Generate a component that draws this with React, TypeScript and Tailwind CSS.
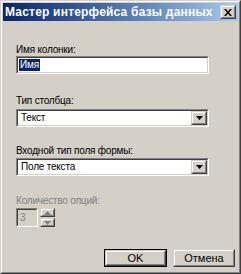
const font = { fontFamily: '"Liberation Sans", Arial, sans-serif' };

function Sunken({ children, className = "" }: { children?: React.ReactNode; className?: string }) {
  return (
    <div className={"border border-t-[#808080] border-l-[#808080] border-r-white border-b-white " + className}>
      <div className="h-full border border-t-[#404040] border-l-[#404040] border-r-[#D4D0C8] border-b-[#D4D0C8]">
        {children}
      </div>
    </div>
  );
}

function Raised({ children, className = "" }: { children?: React.ReactNode; className?: string }) {
  return (
    <div className={"border border-t-[#D4D0C8] border-l-[#D4D0C8] border-r-[#404040] border-b-[#404040] " + className}>
      <div className="h-full flex items-center justify-center border border-t-white border-l-white border-r-[#808080] border-b-[#808080] bg-[#D4D0C8]">
        {children}
      </div>
    </div>
  );
}

function Arrow({ up = false, color = "#000" }: { up?: boolean; color?: string }) {
  return (
    <svg width="7" height="4" viewBox="0 0 7 4">
      <path d={up ? "M3.5 0L7 4H0Z" : "M0 0H7L3.5 4Z"} fill={color} />
    </svg>
  );
}

function Combo({ value }: { value: string }) {
  return (
    <Sunken className="w-[193px] h-[18px]">
      <div className="flex h-full bg-white">
        <div className="flex-1 flex items-center pl-[3px] leading-none text-black">{value}</div>
        <Raised className="w-[16px] h-full">
          <Arrow />
        </Raised>
      </div>
    </Sunken>
  );
}

export default function App() {
  return (
    <div className="w-[241px] h-[274px] select-none" style={font}>
      <div className="h-full border border-t-[#D4D0C8] border-l-[#D4D0C8] border-r-[#404040] border-b-[#404040]">
        <div className="h-full border border-t-white border-l-white border-r-[#808080] border-b-[#808080] bg-[#D4D0C8] p-[1px] flex flex-col">
          {/* Title bar */}
          <div className="h-[18px] shrink-0 flex items-center justify-between pl-[2px] pr-[2px] bg-gradient-to-r from-[#0A246A] to-[#A6CAF0]">
            <span className="text-white font-bold text-[12px] leading-none whitespace-nowrap tracking-[0.2px]">
              Мастер интерфейса базы данных
            </span>
            <Raised className="w-[16px] h-[14px]">
              <svg width="8" height="7" viewBox="0 0 8 7">
                <path d="M0 0h2l2 2.5L6 0h2L5 3.5 8 7H6L4 4.5 2 7H0l3-3.5Z" fill="#000" />
              </svg>
            </Raised>
          </div>

          <div className="flex flex-col pl-[13px] text-[10px] leading-[13px] tracking-[-0.2px] text-black">
            <div className="mt-[22px] h-[13px]">Имя колонки:</div>
            <Sunken className="w-[193px] h-[18px]">
              <div className="h-full bg-white flex items-center pl-[1px]">
                <span className="bg-[#0A246A] text-white px-[1px] leading-[12px]">Имя</span>
              </div>
            </Sunken>

            <div className="mt-[20px] h-[13px]">Тип столбца:</div>
            <div className="mt-[2px]">
              <Combo value="Текст" />
            </div>

            <div className="mt-[17px] h-[13px]">Входной тип поля формы:</div>
            <div className="mt-[1px]">
              <Combo value="Поле текста" />
            </div>

            <div className="mt-[18px] h-[13px] text-[#808080]">Количество опций:</div>
            <div className="mt-[1px] flex items-start gap-[2px]">
              <Sunken className="w-[22px] h-[19px]">
                <div className="h-full bg-[#D4D0C8] pl-[2px] pt-[1px] text-[#808080]">3</div>
              </Sunken>
              <div className="flex flex-col gap-[1px]">
                <Raised className="w-[15px] h-[9px]">
                  <Arrow up color="#808080" />
                </Raised>
                <Raised className="w-[15px] h-[9px]">
                  <Arrow color="#808080" />
                </Raised>
              </div>
            </div>
          </div>

          <div className="mt-auto mb-[4px] flex justify-end gap-[6px] pr-[3px] text-[11px] text-black">
            <div className="border border-black">
              <Raised className="w-[61px] h-[16px]">
                <span className="leading-none">OK</span>
              </Raised>
            </div>
            <Raised className="w-[62px] h-[18px]">
              <span className="leading-none">Отмена</span>
            </Raised>
          </div>
        </div>
      </div>
    </div>
  );
}
